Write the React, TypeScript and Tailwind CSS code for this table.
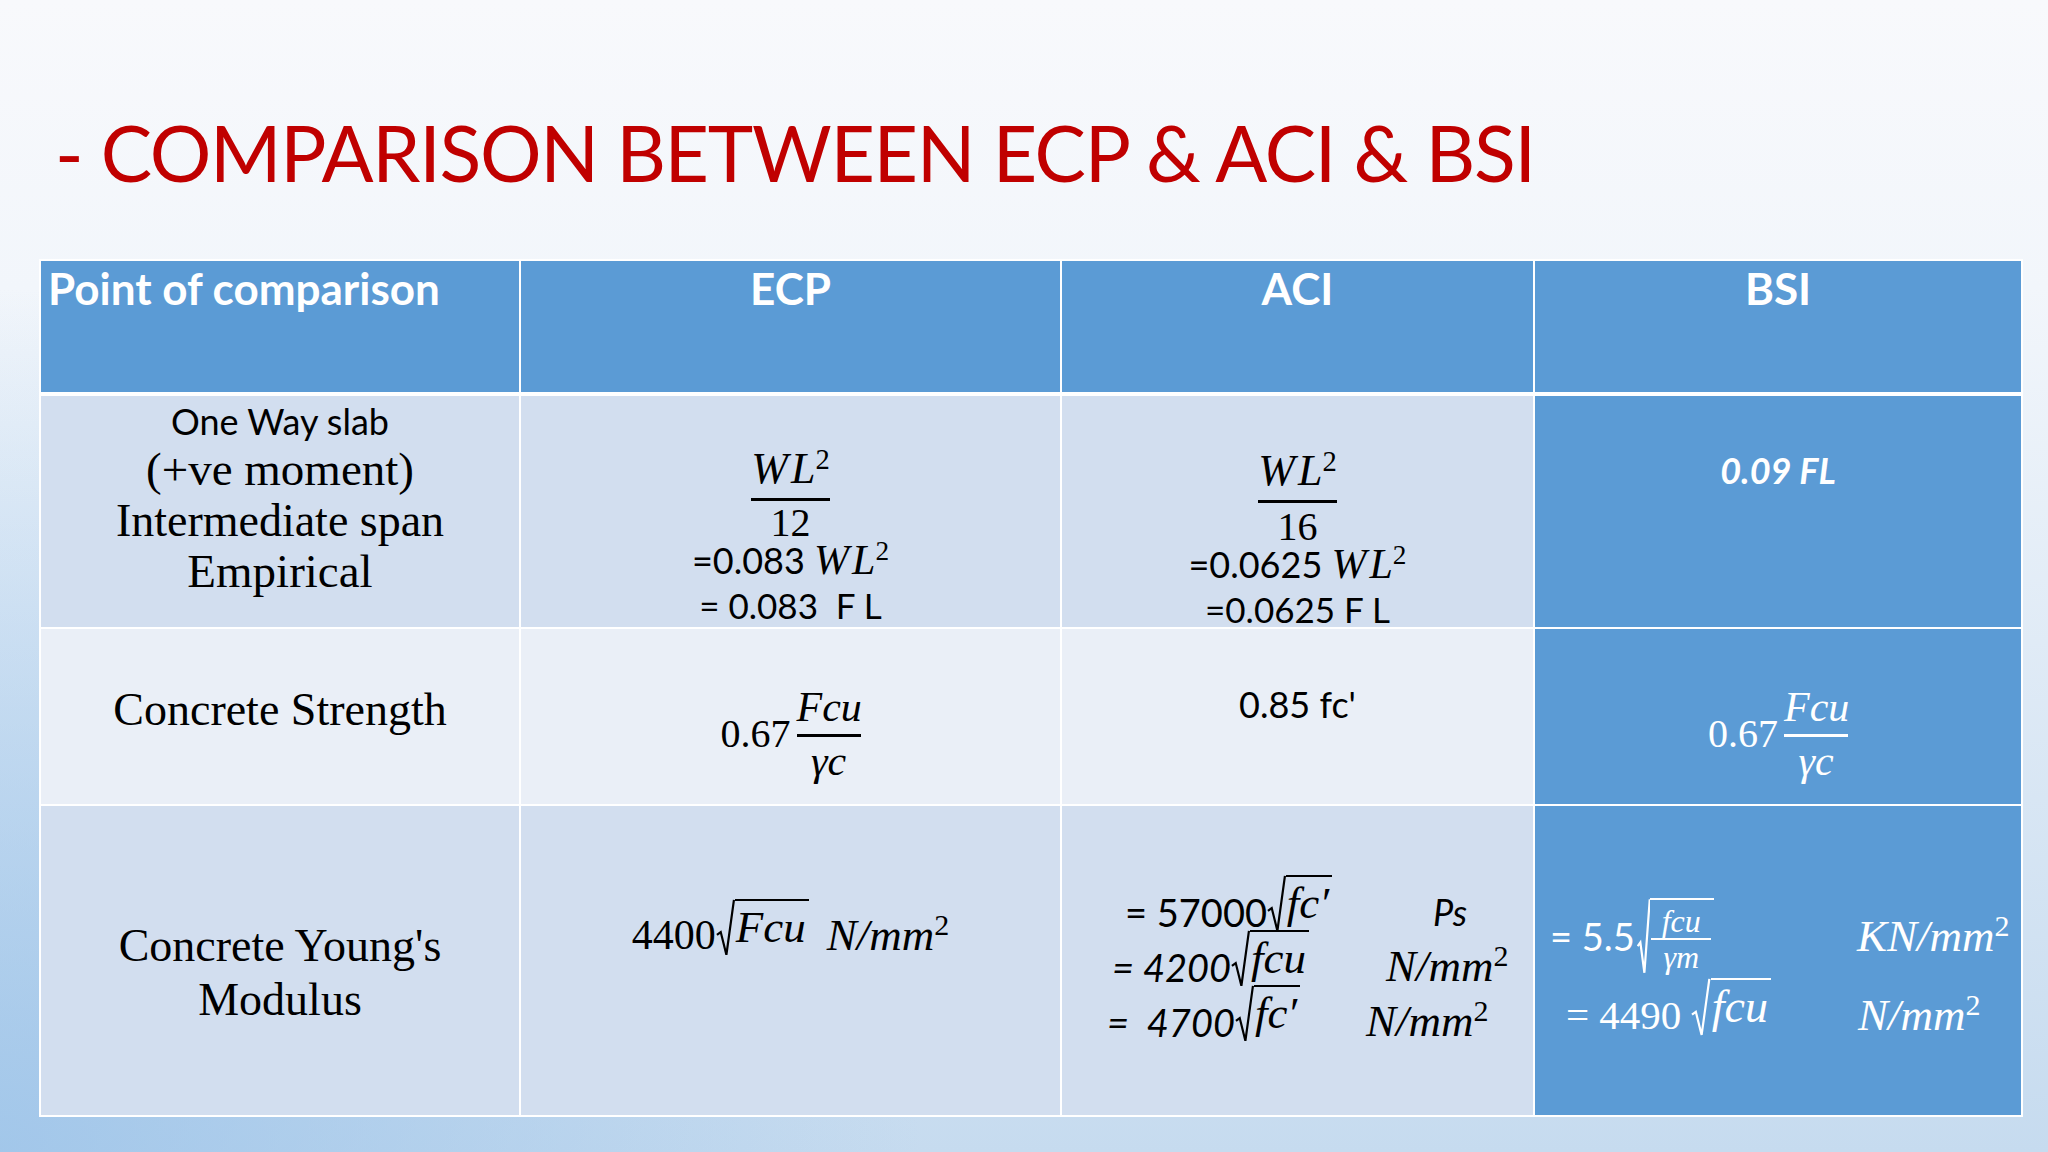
import React from "react";

const cal = "font-['Lato',sans-serif]";
const cam = "font-['Liberation_Serif',serif]";

const Sqrt = ({ children, className = "" }: { children: React.ReactNode; className?: string }) => (
  <span className={`inline-flex items-stretch ${className}`}>
    <svg viewBox="0 0 20 60" preserveAspectRatio="none" className="w-[0.42em]" fill="none" stroke="currentColor">
      <path d="M1 38 L5 35 L11 59 L19 1" strokeWidth="2.2" vectorEffect="non-scaling-stroke" />
    </svg>
    <span className="border-t-[2px] border-current pt-[4px] pl-[1px] pr-[3px] leading-[1]">{children}</span>
  </span>
);

const Frac = ({ num, den, bar }: { num: React.ReactNode; den: React.ReactNode; bar: string }) => (
  <span className="inline-flex flex-col items-center">
    <span className={`leading-[40px] w-[64px] text-center pb-[7px] border-b-[3px] ${bar}`}>{num}</span>
    <span className="leading-[40px] mt-[4px]">{den}</span>
  </span>
);

const WL = () => (
  <span className={`${cam} italic`}>
    W<span className="ml-[3px]">L</span>
    <sup className="not-italic text-[0.65em]">2</sup>
  </span>
);

const Unit = ({ pre = "N" }: { pre?: string }) => (
  <span className={`${cam} italic text-[45px] leading-[42px]`}>
    {pre}/mm<sup className="not-italic text-[30px]">2</sup>
  </span>
);

export default function App() {
  return (
    <div className="w-[2048px] h-[1152px] overflow-hidden bg-[radial-gradient(ellipse_45%_75%_at_0%_100%,rgba(150,192,232,0.75),rgba(150,192,232,0)),linear-gradient(180deg,#f8f9fc_0%,#f2f6fb_25%,#c6dbef_100%)]">
      {/* Title */}
      <h1 className={`${cal} text-[77px] leading-[77px] tracking-[-1.3px] text-[#c00000] pl-[55px] pt-[114px] whitespace-nowrap`}>
        - COMPARISON BETWEEN ECP &amp; ACI &amp; BSI
      </h1>

      {/* Table */}
      <div className="mt-[68px] ml-[39px] w-[1984px] grid grid-cols-[478px_539px_471px_486px] grid-rows-[133px_231px_175px_309px] gap-[2px] p-[2px] bg-white">
        {/* header */}
        <div className={`${cal} bg-[#5b9bd5] text-white font-bold text-[44px] leading-[44px] pl-[7px] pt-[5px] mb-[2px]`}>Point of comparison</div>
        <div className={`${cal} bg-[#5b9bd5] text-white font-bold text-[44px] leading-[44px] text-center pt-[5px] mb-[2px]`}>ECP</div>
        <div className={`${cal} bg-[#5b9bd5] text-white font-bold text-[44px] leading-[44px] text-center pt-[5px] mb-[2px]`}>ACI</div>
        <div className={`${cal} bg-[#5b9bd5] text-white font-bold text-[44px] leading-[44px] text-center pt-[5px] mb-[2px]`}>BSI</div>

        {/* row 1 */}
        <div className="bg-[#d2deef] text-black text-center pt-[2px]">
          <div className={`${cal} text-[36px] leading-[46px]`}>One Way slab</div>
          <div className={`${cam} text-[47px] leading-[51px]`}>(+ve moment)</div>
          <div className={`${cam} text-[46px] leading-[51px]`}>Intermediate span</div>
          <div className={`${cam} text-[47px] leading-[51px]`}>Empirical</div>
        </div>
        <div className="bg-[#d2deef] text-black flex flex-col items-center pt-[48px]">
          <div className="text-[44px] leading-[44px] pb-[7px] border-b-[3px] border-black"><WL /></div>
          <div className={`${cam} text-[40px] leading-[34px] mt-[5px]`}>12</div>
          <div className="text-[36px] leading-[36px]">
            <span className={cal}>=0.083 </span>
            <span className="text-[42px]"><WL /></span>
          </div>
          <div className={`${cal} text-[35px] leading-[36px] mt-[8px] whitespace-pre`}>= 0.083  F L</div>
        </div>
        <div className="bg-[#d2deef] text-black flex flex-col items-center pt-[50px]">
          <div className="text-[44px] leading-[44px] pb-[7px] border-b-[3px] border-black"><WL /></div>
          <div className={`${cam} text-[40px] leading-[34px] mt-[7px]`}>16</div>
          <div className="text-[36px] leading-[36px]">
            <span className={cal}>=0.0625 </span>
            <span className="text-[42px]"><WL /></span>
          </div>
          <div className={`${cal} text-[35px] leading-[36px] mt-[8px]`}>=0.0625 F L</div>
        </div>
        <div className={`${cal} bg-[#5b9bd5] text-white text-center font-bold italic text-[36px] leading-[44px] pt-[52px]`}>0.09 FL</div>

        {/* row 2 */}
        <div className={`${cam} bg-[#eaeff7] text-black text-center text-[46px] leading-[52px] pt-[55px]`}>Concrete Strength</div>
        <div className="bg-[#eaeff7] text-black flex justify-center items-center pt-[24px]">
          <span className={`${cam} text-[40px] mr-[6px] mt-[10px]`}>0.67</span>
          <span className={`${cam} italic text-[42px]`}>
            <Frac num="Fcu" den="γc" bar="border-black" />
          </span>
        </div>
        <div className={`${cal} bg-[#eaeff7] text-black text-center text-[36px] leading-[40px] pt-[55px]`}>0.85 fc'</div>
        <div className="bg-[#5b9bd5] text-white flex justify-center items-center pt-[24px]">
          <span className={`${cam} text-[40px] mr-[6px] mt-[10px]`}>0.67</span>
          <span className={`${cam} italic text-[42px]`}>
            <Frac num="Fcu" den="γc" bar="border-white" />
          </span>
        </div>

        {/* row 3 */}
        <div className={`${cam} bg-[#d2deef] text-black text-center text-[46px] leading-[54px] pt-[113px]`}>
          <div>Concrete Young's</div>
          <div>Modulus</div>
        </div>
        <div className="bg-[#d2deef] text-black flex justify-center pt-[102px]">
          <div className="flex items-end h-[48px] whitespace-pre">
            <span className={`${cam} text-[42px] leading-[42px]`}>4400</span>
            <Sqrt className={`${cam} italic text-[45px]`}>Fcu</Sqrt>
            <span className="w-[18px]" />
            <Unit />
          </div>
        </div>
        <div className="bg-[#d2deef] text-black pt-[80px] flex flex-col gap-[9px]">
          <div className="flex items-end h-[46px] pl-[63px]">
            <div className="w-[308px] flex items-end">
              <span className={`${cal} text-[38px] leading-[40px]`}>= 57000</span>
              <Sqrt className={`${cam} italic text-[45px]`}>fc′</Sqrt>
            </div>
            <span className={`${cal} italic text-[36px] leading-[40px]`}>Ps</span>
          </div>
          <div className="flex items-end h-[46px] pl-[50px]">
            <div className="w-[274px] flex items-end">
              <span className={`${cal} italic text-[38px] leading-[40px]`}>= 4200</span>
              <Sqrt className={`${cam} italic text-[45px]`}>fcu</Sqrt>
            </div>
            <Unit />
          </div>
          <div className="flex items-end h-[46px] pl-[45px]">
            <div className="w-[259px] flex items-end whitespace-pre">
              <span className={`${cal} italic text-[38px] leading-[40px]`}>=  4700</span>
              <Sqrt className={`${cam} italic text-[45px]`}>fc′</Sqrt>
            </div>
            <Unit />
          </div>
        </div>
        <div className="bg-[#5b9bd5] text-white pt-[88px]">
          <div className="flex items-center h-[84px] pl-[15px]">
            <div className="w-[307px] flex items-center">
              <span className={`${cal} text-[38px] mr-[2px]`}>= 5.5</span>
              <Sqrt className={`${cam} italic text-[32px]`}>
                <span className="inline-flex flex-col items-center">
                  <span className="leading-[34px] w-[60px] text-center border-b-[2px] border-white">fcu</span>
                  <span className="leading-[34px]">γm</span>
                </span>
              </Sqrt>
            </div>
            <Unit pre="KN" />
          </div>
          <div className="flex items-end h-[50px] pl-[31px] mt-[8px]">
            <div className="w-[292px] flex items-end">
              <span className={`${cam} text-[41px] leading-[42px] mr-[10px]`}>= 4490</span>
              <Sqrt className={`${cam} italic text-[46px]`}>fcu</Sqrt>
            </div>
            <Unit />
          </div>
        </div>
      </div>
    </div>
  );
}
